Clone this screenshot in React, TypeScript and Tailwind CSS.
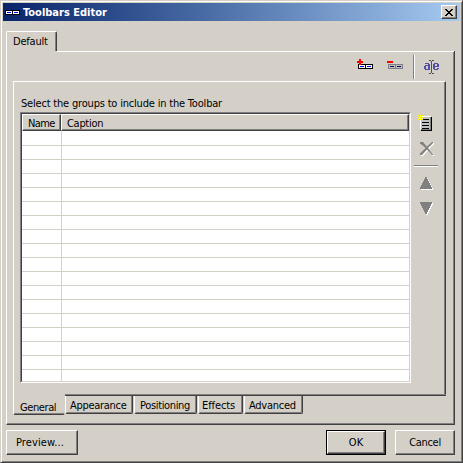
import React from "react";

const raised =
  "border border-t-white border-l-white border-r-[#404040] border-b-[#404040] shadow-[inset_-1px_-1px_0_#808080]";

function Label({ children, className = "" }: { children: React.ReactNode; className?: string }) {
  return <span className={`block whitespace-nowrap leading-[13px] ${className}`}>{children}</span>;
}

function TwoBoxes({ stroke, fill, dash }: { stroke: string; fill: string; dash: string }) {
  return (
    <>
      <path fill={stroke} d="M0 0h15v5H0z" />
      <path fill={fill} d="M1 1h6v3H1zM8 1h6v3H8z" />
      <path fill={dash} d="M2 2h4v1H2zM9 2h4v1H9z" />
    </>
  );
}

function AddIcon() {
  return (
    <svg width="16" height="10" viewBox="0 0 16 10" shapeRendering="crispEdges">
      <g transform="translate(1 5)"><TwoBoxes stroke="#000" fill="#fff" dash="#00f" /></g>
      <path fill="#f00" d="M2 0h2v2h2v2H4v2H2V4H0V2h2z" />
    </svg>
  );
}

function RemoveIcon() {
  return (
    <svg width="16" height="10" viewBox="0 0 16 10" shapeRendering="crispEdges">
      <g transform="translate(1 5)"><TwoBoxes stroke="#808080" fill="#c0c0c0" dash="#000080" /></g>
      <path fill="#f00" d="M0 2h6v2H0z" />
    </svg>
  );
}

function RenameIcon() {
  return (
    <svg width="16" height="14" viewBox="0 0 16 14" shapeRendering="crispEdges">
      <path fill="#5050a8" d="M1 3h4v1H1zM4 4h2v6H4zM1 5h3v1H1zM0 6h2v3H0zM1 9h5v1H1z" />
      <path fill="#5050a8" d="M10 3h4v1h-4zM9 4h2v5H9zM13 4h2v2h-2zM9 6h6v1H9zM13 8h2v1h-2zM10 9h4v1h-4z" />
      <path fill="#505050" d="M5 0h2v1H5zM8 0h2v1H8zM7 1h1v12H7zM5 13h2v1H5zM8 13h2v1H8z" />
    </svg>
  );
}

function NewItemIcon() {
  return (
    <svg width="15" height="16" viewBox="0 0 15 16" shapeRendering="crispEdges">
      <path fill="#000" d="M3 2h11v14H3z" />
      <path fill="#808080" d="M3 2h10v13H3z" />
      <path fill="#c0c0c0" d="M3 2h9v12H3z" />
      <path fill="#fff" d="M3 1h10v1H3zM2 2h1v12H2z" />
      <path fill="#000" d="M5 4h6v1H5zM4 7h7v1H4zM4 10h7v1H4zM4 13h7v1H4z" />
      <path fill="#ff0" d="M0 0h1v1H0zM2 0h1v1H2zM4 0h1v1H4zM1 1h3v3H1zM0 2h5v1H0zM0 4h1v1H0zM2 4h1v1H2zM4 4h1v1H4z" />
    </svg>
  );
}

function DeleteIcon() {
  const strokes =
    "M0 0h3l4 4.500 5-4.500h1v1L8 6l5 6.500v.5h-1L7 7.500 2 13H0v-1.500L5.500 6 0 1.500z";
  return (
    <svg width="15" height="15" viewBox="0 0 15 15">
      <path fill="#fff" transform="translate(1 1)" d={strokes} />
      <path fill="#808080" d={strokes} />
    </svg>
  );
}

function Arrow({ down = false }: { down?: boolean }) {
  const d = down ? "M0 0h12v2h-1v2h-1v2H9v2H8v2H7v2H5v-2H4V8H3V6H2V4H1V2H0z" : "M5 0h2v2h1v2h1v2h1v2h1v2h1v2H0v-2h1V8h1V6h1V4h1V2h1z";
  return (
    <svg width="14" height="14" viewBox="0 0 14 14" shapeRendering="crispEdges">
      <path fill="#fff" transform="translate(1 1)" d={d} />
      <path fill="#808080" d={d} />
    </svg>
  );
}

function Tab({ text, className }: { text: string; className: string }) {
  return (
    <div className={`h-[18px] rounded-b-[2px] border border-t-0 border-l-white border-r-[#404040] border-b-[#404040] pt-[3px] shadow-[inset_-1px_-1px_0_#808080] ${className}`}>
      <Label>{text}</Label>
    </div>
  );
}

export default function App() {
  return (
    <div className="flex h-[463px] w-[463px] flex-col border border-t-[#d4d0c8] border-l-[#d4d0c8] border-r-[#404040] border-b-[#404040] bg-[#d4d0c8] font-['DejaVu_Sans_Condensed','DejaVu_Sans',sans-serif] text-[11px] text-black shadow-[inset_1px_1px_0_#fff,inset_-1px_-1px_0_#808080] [font-stretch:condensed]">
      <div className="mx-[2px] mt-[2px] flex h-[18px] shrink-0 items-center bg-linear-to-r from-[#0a246a] to-[#a6caf0] pr-[3px] pl-[2px]">
        <svg width="15" height="5" viewBox="0 0 15 5" shapeRendering="crispEdges">
          <TwoBoxes stroke="#000" fill="#fff" dash="#00f" />
        </svg>
        <Label className="ml-[3px] font-bold text-white">Toolbars Editor</Label>
        <button className={`ml-auto flex h-[14px] w-4 items-center justify-center bg-[#d4d0c8] ${raised}`}>
          <svg width="8" height="7" viewBox="0 0 8 7" shapeRendering="crispEdges">
            <path d="M0 0h2v1h1v1h2V1h1V0h2v1H7v1H6v1H5v1h1v1h1v1h1v1H6V6H5V5H3v1H2v1H0V6h1V5h1V4h1V3H2V2H1V1H0z" />
          </svg>
        </button>
      </div>

      <div className="mt-[10px] ml-[5px] flex h-5 w-[449px] shrink-0">
        <div className="w-[51px] rounded-t-[2px] border border-b-0 border-t-white border-l-white border-r-[#404040] pt-[3px] pl-[6px] tracking-[-0.2px] shadow-[inset_-1px_0_0_#808080]">
          <Label>Default</Label>
        </div>
      </div>
      <div className="ml-[5px] flex h-[374px] w-[449px] shrink-0 flex-col border border-t-0 border-l-white border-r-[#404040] border-b-[#404040] shadow-[inset_-1px_-1px_0_#808080]">
        <div className="ml-[50px] h-px shrink-0 bg-white" />
        <div className="flex h-[29px] shrink-0 items-start pt-[3px] pl-[350px]">
          <div className="mt-1"><AddIcon /></div>
          <div className="mt-1 ml-[14px]"><RemoveIcon /></div>
          <div className="ml-[10px] h-6 w-[2px] border-r border-l border-r-white border-l-[#808080]" />
          <div className="mt-[5px] ml-[9px]"><RenameIcon /></div>
        </div>

        <div className="ml-[6px] flex h-[313px] w-[433px] shrink-0 flex-col border border-b-0 border-t-white border-l-white border-r-[#404040] shadow-[inset_-1px_0_0_#808080]">
          <Label className="mt-[15px] ml-[7px] tracking-[-0.19px]">Select the groups to include in the Toolbar</Label>
          <div className="mt-[2px] ml-[6px] flex">
            <div className="h-[271px] w-[391px] border border-t-[#808080] border-l-[#808080] border-r-white border-b-white">
              <div className="flex h-[269px] flex-col border border-t-[#404040] border-l-[#404040] border-r-[#d4d0c8] border-b-[#d4d0c8] bg-white">
                <div className="flex h-[17px] shrink-0 bg-[#d4d0c8]">
                  <div className={`w-[39px] pt-[2px] pl-[5px] tracking-[-0.6px] ${raised}`}><Label>Name</Label></div>
                  <div className={`flex-1 pt-[2px] pl-[5px] tracking-[-0.3px] ${raised}`}><Label>Caption</Label></div>
                </div>
                {Array.from({ length: 17 }, (_, i) => (
                  <div key={i} className={`flex shrink-0 border-b border-[#d4d0c8] ${i === 0 ? "h-[15px]" : "h-[14px]"}`}>
                    <div className="w-10 border-r border-[#d4d0c8]" />
                  </div>
                ))}
                <div className="w-10 flex-1 border-r border-[#d4d0c8]" />
              </div>
            </div>
            <div className="flex w-[30px] flex-col pl-[3px]">
              <div className="mt-[3px] ml-[4px] h-[27px]"><NewItemIcon /></div>
              <div className="ml-[6px] h-[23px]"><DeleteIcon /></div>
              <div className="h-[2px] w-6 border-t border-b border-t-[#808080] border-b-white" />
              <div className="mt-[10px] ml-[6px] h-[25px]"><Arrow /></div>
              <div className="ml-[6px]"><Arrow down /></div>
            </div>
          </div>
        </div>
        <div className="ml-[6px] flex h-[21px] w-[433px] shrink-0 items-start">
          <div className="h-[21px] w-[52px] rounded-b-[2px] border border-t-0 border-l-white border-r-transparent border-b-[#404040] pt-[7px] pl-[6px] tracking-[-0.4px] shadow-[inset_0_-1px_0_#808080]">
            <Label>General</Label>
          </div>
          <div className="flex flex-1 flex-col">
            <div className="h-[2px] border-t border-b border-t-[#808080] border-b-[#404040]" />
            <div className="flex items-start">
              <Tab text="Appearance" className="w-[68px] border-l-[#404040] pl-[4px] tracking-[-0.3px]" />
              <Tab text="Positioning" className="ml-px w-[63px] pl-[5px] tracking-[-0.35px]" />
              <Tab text="Effects" className="ml-px w-[45px] pl-[3px] tracking-[-0.1px]" />
              <Tab text="Advanced" className="ml-px w-[59px] pl-[4px] tracking-[-0.25px]" />
            </div>
          </div>
        </div>
      </div>

      <div className="mt-[5px] ml-[5px] flex h-[25px] w-[449px] shrink-0">
        <button className={`flex w-[72px] items-center pl-[9px] ${raised}`}><Label className="tracking-[0.1px]">Preview...</Label></button>
        <button className="ml-auto flex w-[60px] border border-black">
          <span className={`flex h-full w-full items-center justify-center ${raised}`}><Label>OK</Label></span>
        </button>
        <button className={`ml-[9px] flex w-[60px] items-center justify-center ${raised}`}><Label className="tracking-[-0.3px]">Cancel</Label></button>
      </div>
    </div>
  );
}
